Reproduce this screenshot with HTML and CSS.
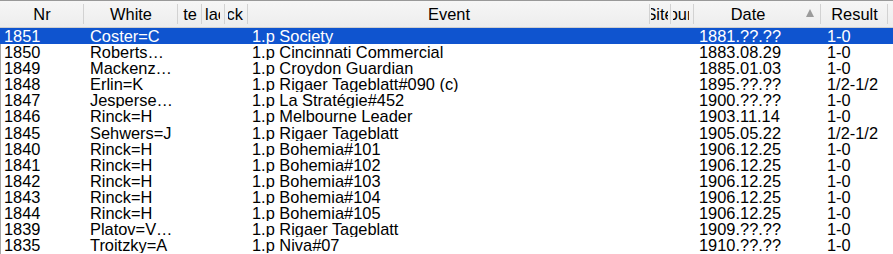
FILE: index.html
```html
<!DOCTYPE html>
<html>
  <head>
    <title>Games</title>
    <link rel="stylesheet" href="styles.css">
  </head>
  <body>
    <div class="table">
      <div class="head cols">
        <div class="th">Nr</div>
        <div class="th">White</div>
        <div class="th">te</div>
        <div class="th"><span class="clip clip-lack">lack</span></div>
        <div class="th"><span class="clip clip-ck">ock</span></div>
        <div class="th">Event</div>
        <div class="th"><span class="clip clip-site">Site</span></div>
        <div class="th"><span class="clip clip-round">Round</span></div>
        <div class="th th-sorted"><span class="label">Date</span><span class="arrow"></span></div>
        <div class="th">Result</div>
        <div class="th th-end"></div>
      </div>

      <div class="row cols selected">
        <div class="td nr">1851</div><div class="td white">Coster=C</div><div></div><div></div><div></div>
        <div class="td event">1.p Society</div><div></div><div></div>
        <div class="td date">1881.??.??</div><div class="td result">1-0</div><div></div>
      </div>
      <div class="row cols">
        <div class="td nr">1850</div><div class="td white">Roberts…</div><div></div><div></div><div></div>
        <div class="td event">1.p Cincinnati Commercial</div><div></div><div></div>
        <div class="td date">1883.08.29</div><div class="td result">1-0</div><div></div>
      </div>
      <div class="row cols">
        <div class="td nr">1849</div><div class="td white">Mackenz…</div><div></div><div></div><div></div>
        <div class="td event">1.p Croydon Guardian</div><div></div><div></div>
        <div class="td date">1885.01.03</div><div class="td result">1-0</div><div></div>
      </div>
      <div class="row cols">
        <div class="td nr">1848</div><div class="td white">Erlin=K</div><div></div><div></div><div></div>
        <div class="td event">1.p Rigaer Tageblatt#090 (c)</div><div></div><div></div>
        <div class="td date">1895.??.??</div><div class="td result">1/2-1/2</div><div></div>
      </div>
      <div class="row cols">
        <div class="td nr">1847</div><div class="td white">Jesperse…</div><div></div><div></div><div></div>
        <div class="td event">1.p La Stratégie#452</div><div></div><div></div>
        <div class="td date">1900.??.??</div><div class="td result">1-0</div><div></div>
      </div>
      <div class="row cols">
        <div class="td nr">1846</div><div class="td white">Rinck=H</div><div></div><div></div><div></div>
        <div class="td event">1.p Melbourne Leader</div><div></div><div></div>
        <div class="td date">1903.11.14</div><div class="td result">1-0</div><div></div>
      </div>
      <div class="row cols">
        <div class="td nr">1845</div><div class="td white">Sehwers=J</div><div></div><div></div><div></div>
        <div class="td event">1.p Rigaer Tageblatt</div><div></div><div></div>
        <div class="td date">1905.05.22</div><div class="td result">1/2-1/2</div><div></div>
      </div>
      <div class="row cols">
        <div class="td nr">1840</div><div class="td white">Rinck=H</div><div></div><div></div><div></div>
        <div class="td event">1.p Bohemia#101</div><div></div><div></div>
        <div class="td date">1906.12.25</div><div class="td result">1-0</div><div></div>
      </div>
      <div class="row cols">
        <div class="td nr">1841</div><div class="td white">Rinck=H</div><div></div><div></div><div></div>
        <div class="td event">1.p Bohemia#102</div><div></div><div></div>
        <div class="td date">1906.12.25</div><div class="td result">1-0</div><div></div>
      </div>
      <div class="row cols">
        <div class="td nr">1842</div><div class="td white">Rinck=H</div><div></div><div></div><div></div>
        <div class="td event">1.p Bohemia#103</div><div></div><div></div>
        <div class="td date">1906.12.25</div><div class="td result">1-0</div><div></div>
      </div>
      <div class="row cols">
        <div class="td nr">1843</div><div class="td white">Rinck=H</div><div></div><div></div><div></div>
        <div class="td event">1.p Bohemia#104</div><div></div><div></div>
        <div class="td date">1906.12.25</div><div class="td result">1-0</div><div></div>
      </div>
      <div class="row cols">
        <div class="td nr">1844</div><div class="td white">Rinck=H</div><div></div><div></div><div></div>
        <div class="td event">1.p Bohemia#105</div><div></div><div></div>
        <div class="td date">1906.12.25</div><div class="td result">1-0</div><div></div>
      </div>
      <div class="row cols">
        <div class="td nr">1839</div><div class="td white">Platov=V…</div><div></div><div></div><div></div>
        <div class="td event">1.p Rigaer Tageblatt</div><div></div><div></div>
        <div class="td date">1909.??.??</div><div class="td result">1-0</div><div></div>
      </div>
      <div class="row cols">
        <div class="td nr">1835</div><div class="td white">Troitzky=A</div><div></div><div></div><div></div>
        <div class="td event">1.p Niva#07</div><div></div><div></div>
        <div class="td date">1910.??.??</div><div class="td result">1-0</div><div></div>
      </div>
      <div class="row cols">
        <div class="td nr">1834</div><div class="td white">Troitzky=A</div><div></div><div></div><div></div>
        <div class="td event">1.p Novoe Vremya</div><div></div><div></div>
        <div class="td date">1910.??.??</div><div class="td result">1-0</div><div></div>
      </div>
    </div>
  </body>
</html>
```

FILE: styles.css
```css
body {
  margin: 0;
  background-color: white;
  color: black;
  font-family: "Liberation Sans", Arial, sans-serif;
  font-size: 16.4px;
  overflow: hidden;
}

.table {
  width: 893px;
  height: 254px;
  overflow: hidden;
}

.cols {
  display: grid;
  grid-template-columns: 84px 94px 24px 23px 23px 402px 21px 23px 127px 67px 1fr;
}

/* header */
.head {
  height: 26px;
  border-top: 1px solid #999999;
  border-bottom: 1px solid #cfcfcf;
  background: linear-gradient(#f6f6f6, #ededed);
}
.th {
  display: flex;
  align-items: center;
  justify-content: center;
  overflow: hidden;
  white-space: nowrap;
  line-height: 26px;
  background: linear-gradient(#d2d2d2, #d2d2d2) right 3px / 1px 20px no-repeat;
}
.th-end {
  background: none;
}
.clip {
  display: block;
  overflow: hidden;
  white-space: nowrap;
}
.clip-lack {
  width: 15px;
  margin: 0 5px 0 3px;
}
.clip-ck {
  width: 17px;
  margin: 0 3px;
  display: flex;
  justify-content: flex-end;
  padding-right: 2px;
}
.clip-site {
  width: 17px;
  margin: 0 3px 0 1px;
  display: flex;
  justify-content: center;
}
.clip-round {
  width: 16px;
  margin: 0 5px 0 2px;
  display: flex;
  justify-content: center;
}
.th-sorted {
  justify-content: flex-start;
}
.th-sorted .label {
  flex: 1;
  text-align: center;
}
.arrow {
  width: 0;
  height: 0;
  margin: 0 7px 2px 4px;
  border-left: 4px solid transparent;
  border-right: 4px solid transparent;
  border-bottom: 8px solid #9b9b9b;
}

/* rows */
.row {
  height: 16.1px;
  line-height: 16.1px;
  border-left: 1px solid #a8a8a8;
}
.row > div:first-child {
  margin-left: -1px;
}
.row.selected {
  background-color: #0f54cf;
  border-left-color: #0f54cf;
  color: white;
}
.td {
  white-space: nowrap;
  overflow: hidden;
}
.nr {
  padding-left: 4px;
}
.white {
  padding-left: 5px;
}
.event {
  padding-left: 3px;
}
.date {
  padding-left: 4px;
}
.result {
  padding-left: 5px;
}
```
